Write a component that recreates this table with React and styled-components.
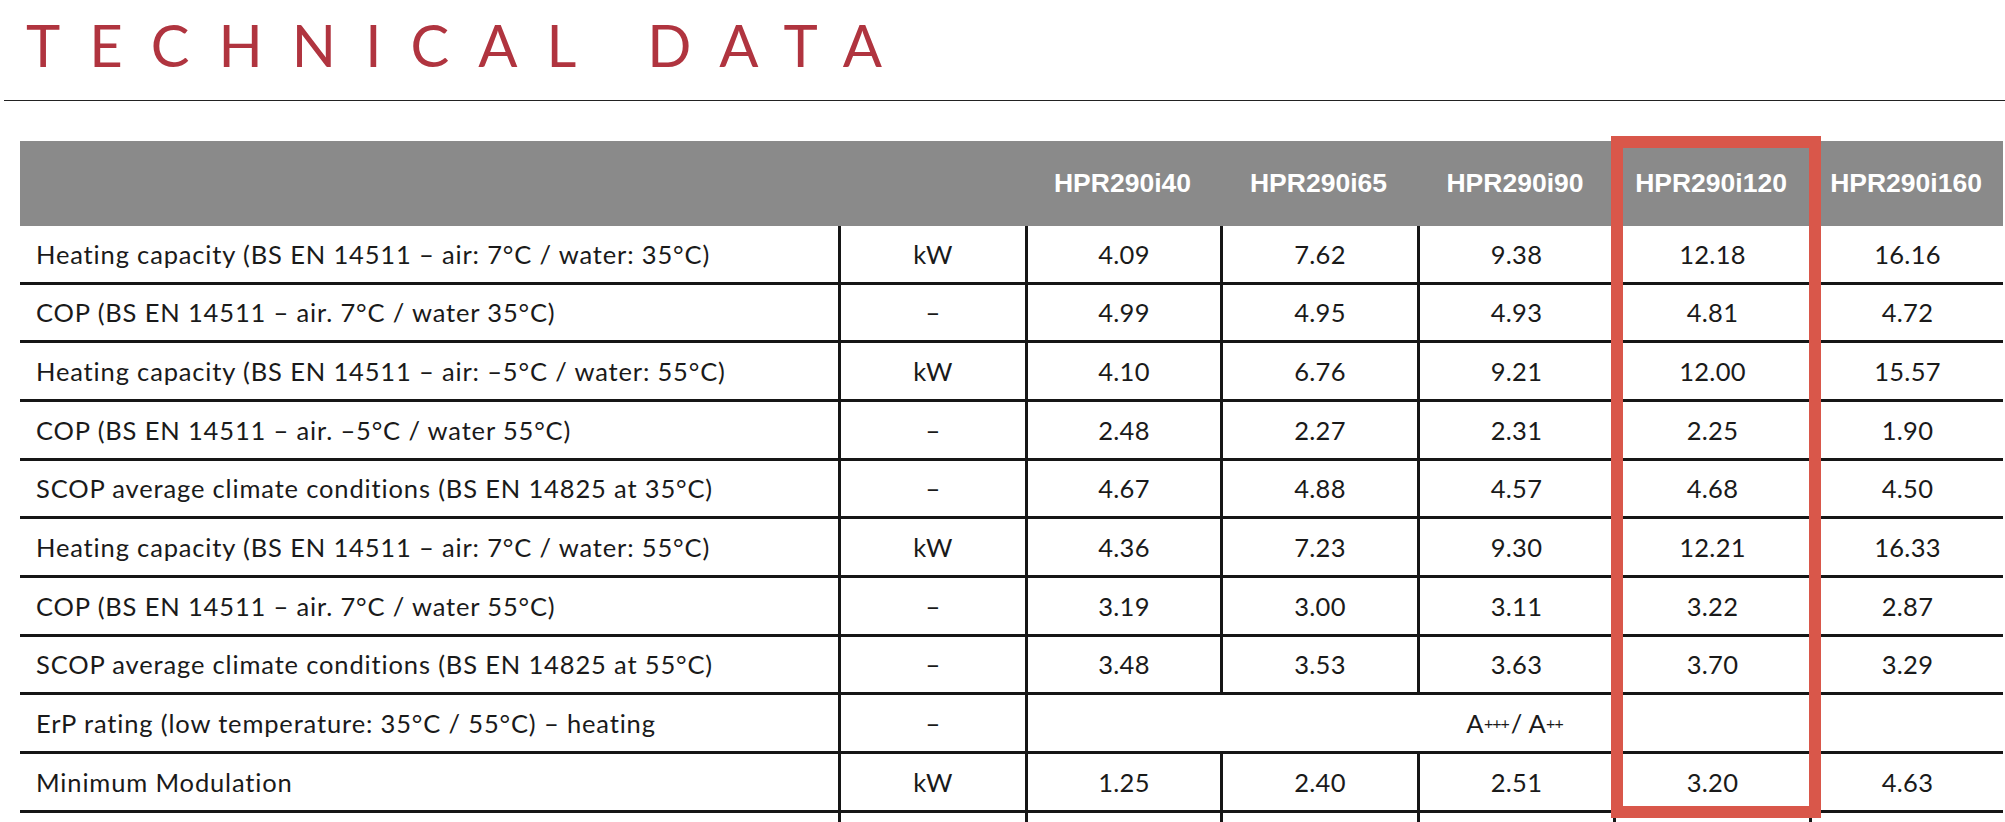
import React from 'react';
import styled, { createGlobalStyle } from 'styled-components';

const GlobalStyle = createGlobalStyle`
  html, body {
    margin: 0;
    padding: 0;
    background: #ffffff;
  }
`;

const Page = styled.div`
  width: 2005px;
  height: 822px;
  overflow: hidden;
  background: #ffffff;
`;

const TitleBar = styled.header`
  height: 101px;
  margin-left: 4px;
  padding: 16px 0 0 22px;
  box-sizing: border-box;
  border-bottom: 1px solid #222222;
`;

const Title = styled.h1`
  margin: 0;
  font-family: Lato, 'Liberation Sans', sans-serif;
  font-weight: 400;
  font-size: 58px;
  line-height: 58px;
  letter-spacing: 29px;
  color: #b0343f;
`;

const TableWrap = styled.div`
  position: relative;
  margin: 40px 0 0 20px;
  width: 1983px;
`;

const Grid = styled.div`
  display: grid;
  grid-template-columns: 818px 187px 195px 197px 196px 196px 194px;
  grid-template-rows: 85px;
  grid-auto-rows: 58.67px;
`;

const HeadCell = styled.div`
  display: flex;
  align-items: center;
  justify-content: center;
  background: #8a8a8a;
  color: #ffffff;
  font-family: 'Liberation Sans', Arial, sans-serif;
  font-weight: 700;
  font-size: 26.5px;
`;

const Cell = styled.div`
  display: flex;
  align-items: center;
  justify-content: ${(p) => (p.$left ? 'flex-start' : 'center')};
  box-sizing: border-box;
  padding-left: ${(p) => (p.$left ? '16px' : '0')};
  border-bottom: 3px solid #161616;
  border-left: ${(p) => (p.$line ? '3px solid #161616' : 'none')};
  grid-column: ${(p) => (p.$span ? `span ${p.$span}` : 'auto')};
  font-family: Lato, 'Liberation Sans', sans-serif;
  font-size: 25.5px;
  letter-spacing: ${(p) => (p.$left ? '0.85px' : '0.3px')};
  color: #1a1a1a;
  white-space: nowrap;
`;

const Sup = styled.sup`
  font-size: 16px;
  vertical-align: 8px;
  line-height: 0;
  letter-spacing: -1px;
  margin-right: 2px;
`;

const Highlight = styled.div`
  position: absolute;
  left: 1591px;
  top: -5px;
  width: 210px;
  height: 682px;
  box-sizing: border-box;
  border: 12px solid #d9574a;
  pointer-events: none;
`;

const models = ['HPR290i40', 'HPR290i65', 'HPR290i90', 'HPR290i120', 'HPR290i160'];

const rows = [
  ['Heating capacity (BS EN 14511 – air: 7°C / water: 35°C)', 'kW', ['4.09', '7.62', '9.38', '12.18', '16.16']],
  ['COP (BS EN 14511 – air. 7°C / water 35°C)', '–', ['4.99', '4.95', '4.93', '4.81', '4.72']],
  ['Heating capacity (BS EN 14511 – air: –5°C / water: 55°C)', 'kW', ['4.10', '6.76', '9.21', '12.00', '15.57']],
  ['COP (BS EN 14511 – air. –5°C / water 55°C)', '–', ['2.48', '2.27', '2.31', '2.25', '1.90']],
  ['SCOP average climate conditions (BS EN 14825 at 35°C)', '–', ['4.67', '4.88', '4.57', '4.68', '4.50']],
  ['Heating capacity (BS EN 14511 – air: 7°C / water: 55°C)', 'kW', ['4.36', '7.23', '9.30', '12.21', '16.33']],
  ['COP (BS EN 14511 – air. 7°C / water 55°C)', '–', ['3.19', '3.00', '3.11', '3.22', '2.87']],
  ['SCOP average climate conditions (BS EN 14825 at 55°C)', '–', ['3.48', '3.53', '3.63', '3.70', '3.29']],
  ['ErP rating (low temperature: 35°C / 55°C) – heating', '–', null],
  ['Minimum Modulation', 'kW', ['1.25', '2.40', '2.51', '3.20', '4.63']],
  ['', '', ['', '', '', '', '']],
];

export default function App() {
  return (
    <Page>
      <GlobalStyle />
      <TitleBar>
        <Title>TECHNICAL DATA</Title>
      </TitleBar>
      <TableWrap>
        <Grid>
          <HeadCell />
          <HeadCell />
          {models.map((m) => (
            <HeadCell key={m}>{m}</HeadCell>
          ))}
          {rows.map(([label, unit, values], i) => (
            <React.Fragment key={i}>
              <Cell $left>{label}</Cell>
              <Cell $line>{unit}</Cell>
              {values ? (
                values.map((v, j) => (
                  <Cell key={j} $line>
                    {v}
                  </Cell>
                ))
              ) : (
                <Cell $line $span={5}>
                  A<Sup>+++</Sup>/ A<Sup>++</Sup>
                </Cell>
              )}
            </React.Fragment>
          ))}
        </Grid>
        <Highlight />
      </TableWrap>
    </Page>
  );
}
